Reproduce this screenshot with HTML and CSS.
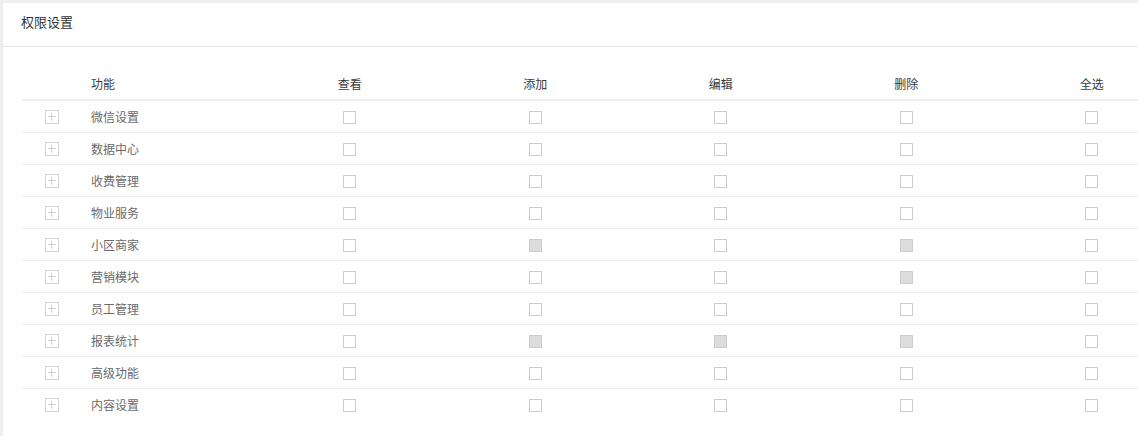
FILE: index.html
```html
<!DOCTYPE html>
<html lang="zh-CN">
<head>
    <meta charset="UTF-8">
    <title>权限设置</title>
    <link rel="stylesheet" href="styles.css">
</head>
<body>
    <div class="panel">
        <div class="panel-header">权限设置</div>
        <div class="panel-body">
            <table class="perm-table">
                <colgroup>
                    <col class="col-toggle">
                    <col class="col-name">
                    <col class="col-check">
                    <col class="col-check">
                    <col class="col-check">
                    <col class="col-check">
                    <col class="col-check">
                </colgroup>
                <thead>
                    <tr>
                        <th></th>
                        <th class="name">功能</th>
                        <th>查看</th>
                        <th>添加</th>
                        <th>编辑</th>
                        <th>删除</th>
                        <th>全选</th>
                    </tr>
                </thead>
                <tbody>
                    <tr>
                        <td><span class="expand"></span></td>
                        <td class="name">微信设置</td>
                        <td><span class="box"></span></td>
                        <td><span class="box"></span></td>
                        <td><span class="box"></span></td>
                        <td><span class="box"></span></td>
                        <td><span class="box"></span></td>
                    </tr>
                    <tr>
                        <td><span class="expand"></span></td>
                        <td class="name">数据中心</td>
                        <td><span class="box"></span></td>
                        <td><span class="box"></span></td>
                        <td><span class="box"></span></td>
                        <td><span class="box"></span></td>
                        <td><span class="box"></span></td>
                    </tr>
                    <tr>
                        <td><span class="expand"></span></td>
                        <td class="name">收费管理</td>
                        <td><span class="box"></span></td>
                        <td><span class="box"></span></td>
                        <td><span class="box"></span></td>
                        <td><span class="box"></span></td>
                        <td><span class="box"></span></td>
                    </tr>
                    <tr>
                        <td><span class="expand"></span></td>
                        <td class="name">物业服务</td>
                        <td><span class="box"></span></td>
                        <td><span class="box"></span></td>
                        <td><span class="box"></span></td>
                        <td><span class="box"></span></td>
                        <td><span class="box"></span></td>
                    </tr>
                    <tr>
                        <td><span class="expand"></span></td>
                        <td class="name">小区商家</td>
                        <td><span class="box"></span></td>
                        <td><span class="box disabled"></span></td>
                        <td><span class="box"></span></td>
                        <td><span class="box disabled"></span></td>
                        <td><span class="box"></span></td>
                    </tr>
                    <tr>
                        <td><span class="expand"></span></td>
                        <td class="name">营销模块</td>
                        <td><span class="box"></span></td>
                        <td><span class="box"></span></td>
                        <td><span class="box"></span></td>
                        <td><span class="box disabled"></span></td>
                        <td><span class="box"></span></td>
                    </tr>
                    <tr>
                        <td><span class="expand"></span></td>
                        <td class="name">员工管理</td>
                        <td><span class="box"></span></td>
                        <td><span class="box"></span></td>
                        <td><span class="box"></span></td>
                        <td><span class="box"></span></td>
                        <td><span class="box"></span></td>
                    </tr>
                    <tr>
                        <td><span class="expand"></span></td>
                        <td class="name">报表统计</td>
                        <td><span class="box"></span></td>
                        <td><span class="box disabled"></span></td>
                        <td><span class="box disabled"></span></td>
                        <td><span class="box disabled"></span></td>
                        <td><span class="box"></span></td>
                    </tr>
                    <tr>
                        <td><span class="expand"></span></td>
                        <td class="name">高级功能</td>
                        <td><span class="box"></span></td>
                        <td><span class="box"></span></td>
                        <td><span class="box"></span></td>
                        <td><span class="box"></span></td>
                        <td><span class="box"></span></td>
                    </tr>
                    <tr>
                        <td><span class="expand"></span></td>
                        <td class="name">内容设置</td>
                        <td><span class="box"></span></td>
                        <td><span class="box"></span></td>
                        <td><span class="box"></span></td>
                        <td><span class="box"></span></td>
                        <td><span class="box"></span></td>
                    </tr>
                </tbody>
            </table>
        </div>
    </div>
</body>
</html>
```

FILE: styles.css
```css
body {
    margin: 0;
    padding: 3px 0 0 3px;
    background-color: #eeeeee;
    font-family: "Liberation Sans", "Noto Sans CJK SC", sans-serif;
    height: 100vh;
    box-sizing: border-box;
    overflow: hidden;
}

.panel {
    background-color: #fff;
    height: 100%;
    overflow: hidden;
}

.panel-header {
    height: 43px;
    line-height: 40px;
    padding-left: 18px;
    font-size: 13px;
    color: #333;
    border-bottom: 1px solid #e3e3e3;
}

.panel-body {
    padding: 21px 0 0 19px;
}

.perm-table {
    table-layout: fixed;
    width: 1162px;
    border-collapse: separate;
    border-spacing: 0;
    font-size: 12px;
}

.col-toggle { width: 60px; }
.col-name { width: 175px; }
.col-check { width: 185.5px; }

.perm-table th {
    height: 31px;
    padding: 0;
    font-weight: normal;
    color: #3a3a3a;
    text-align: center;
    border-bottom: 2px solid #eeeeee;
}

.perm-table td {
    height: 31px;
    padding: 0;
    text-align: center;
    color: #6a6a6a;
    border-bottom: 1px solid #eeeeee;
}

.perm-table tbody tr:last-child td {
    border-bottom: none;
}

.perm-table .name {
    text-align: left;
    padding-left: 9px;
}

/* Expand toggle: square with a plus */
.expand {
    display: inline-block;
    position: relative;
    width: 12px;
    height: 12px;
    border: 1px solid #d4d4d4;
    vertical-align: middle;
    margin-left: -1px;
}

.expand::before,
.expand::after {
    content: "";
    position: absolute;
    background-color: #d0d0d0;
}

.expand::before {
    left: 2px;
    right: 2px;
    top: 5px;
    height: 1px;
}

.expand::after {
    top: 2px;
    bottom: 2px;
    left: 5px;
    width: 1px;
}

.box {
    display: inline-block;
    width: 11px;
    height: 11px;
    border: 1px solid #cccccc;
    background-color: #fff;
    vertical-align: middle;
}

.box.disabled {
    background-color: #dcdcdf;
}
```
